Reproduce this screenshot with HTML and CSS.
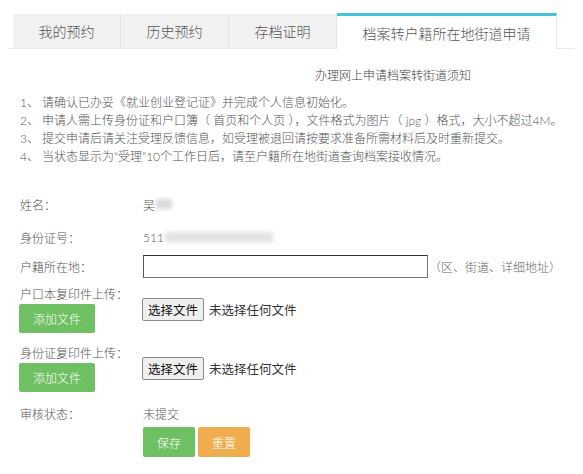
FILE: index.html
```html
<!DOCTYPE html>
<html lang="zh">
<head>
<meta charset="utf-8">
<title>档案转户籍所在地街道申请</title>
<link rel="stylesheet" href="styles.css">
</head>
<body>
<div class="tabs">
  <div class="tab">我的预约</div>
  <div class="tab">历史预约</div>
  <div class="tab">存档证明</div>
  <div class="tab active">档案转户籍所在地街道申请</div>
</div>
<div class="notice-title">办理网上申请档案转街道须知</div>
<ol class="notice">
  <li><span class="num">1、</span>请确认已办妥《就业创业登记证》并完成个人信息初始化。</li>
  <li><span class="num">2、</span>申请人需上传身份证和户口簿（ 首页和个人页 ），文件格式为图片（ jpg ）格式，大小不超过4M。</li>
  <li><span class="num">3、</span>提交申请后请关注受理反馈信息，如受理被退回请按要求准备所需材料后及时重新提交。</li>
  <li><span class="num">4、</span>当状态显示为“受理”10个工作日后，请至户籍所在地街道查询档案接收情况。</li>
</ol>
<div class="form">
  <div class="row r-name">
    <div class="label">姓名：</div>
    <div class="value">吴<span class="blur w1"></span></div>
  </div>
  <div class="row r-id">
    <div class="label">身份证号：</div>
    <div class="value">511<span class="blur w2"></span></div>
  </div>
  <div class="row r-addr">
    <div class="label">户籍所在地：</div>
    <div class="value"><input class="text" type="text"><span class="hint">（区、街道、详细地址）</span></div>
  </div>
  <div class="upload">
    <div class="up-left">
      <div class="up-label">户口本复印件上传：</div>
      <div class="btn green add">添加文件</div>
    </div>
    <div class="file"><span class="choose">选择文件</span><span class="none">未选择任何文件</span></div>
  </div>
  <div class="upload second">
    <div class="up-left">
      <div class="up-label">身份证复印件上传：</div>
      <div class="btn green add">添加文件</div>
    </div>
    <div class="file"><span class="choose">选择文件</span><span class="none">未选择任何文件</span></div>
  </div>
  <div class="row r-status">
    <div class="label">审核状态：</div>
    <div class="value">未提交</div>
  </div>
  <div class="actions">
    <div class="btn green">保存</div>
    <div class="btn orange">重置</div>
  </div>
</div>
</body>
</html>
```

FILE: styles.css
```css
* { box-sizing: border-box; }
body {
  margin: 0;
  background: #fff;
  color: #555;
  font-family: "Lato", "Noto Sans CJK SC", sans-serif;
  font-weight: 300;
  font-size: 12px;
}
.tabs {
  display: flex;
  align-items: flex-end;
  margin: 13px 8px 0;
  padding-left: 5px;
  border-bottom: 1px solid #eaeaea;
  height: 36px;
}
.tab {
  width: 108px;
  height: 34px;
  background: #f1f1f1;
  border-right: 1px solid #e4e4e4;
  display: flex;
  align-items: center;
  justify-content: center;
  font-size: 14px;
  color: #555;
}
.tab.active {
  width: 220px;
  height: 36px;
  margin-bottom: -1px;
  background: #fff;
  border-top: 3px solid #45c3d8;
  border-right: 1px solid #e8e8e8;
  padding-top: 1px;
}
.notice-title {
  padding-left: 315px;
  margin-top: 18px;
  line-height: 18px;
  color: #444;
}
.notice {
  list-style: none;
  margin: 9px 0 0;
  padding: 0 0 0 20px;
  line-height: 18px;
  color: #555;
}
.notice li { display: flex; white-space: pre; }
.num { width: 22px; flex: none; }
.form { padding-left: 20px; margin-top: 26px; }
.row { display: flex; align-items: center; }
.label { width: 123px; flex: none; }
.value { display: flex; align-items: center; }
.r-name { height: 24px; }
.r-id { height: 24px; margin-top: 9px; }
.r-addr { height: 24px; margin-top: 5px; }
.blur {
  display: inline-block;
  height: 10px;
  background: #d9d9d9;
  filter: blur(2px);
  margin-left: 1px;
}
.w1 { width: 16px; }
.w2 { width: 108px; background: #e2e2e2; }
.text {
  width: 285px;
  height: 23px;
  border: 1px solid #767676;
  border-top-color: #333;
  border-left-color: #555;
  margin: 0;
  padding: 0 3px;
  font: inherit;
}
.hint { margin-left: 1px; color: #666; }
.upload { display: flex; margin-top: 8px; }
.upload.second { margin-top: 12px; }
.up-left { width: 123px; flex: none; margin-left: -1px; }
.up-label { line-height: 18px; padding-left: 1px; }
.add { width: 76px; height: 29px; }
.file { display: flex; align-items: center; margin-top: 12px; height: 23px; }
.choose {
  display: inline-flex;
  align-items: center;
  height: 23px;
  padding: 0 5px;
  border: 1px solid #8a8a8a;
  border-radius: 2px;
  background: #efefef;
  color: #111;
  font-size: 12.5px;
  font-weight: 400;
}
.none { margin-left: 5px; color: #333; font-size: 12.5px; font-weight: 400; }
.btn {
  display: flex;
  align-items: center;
  justify-content: center;
  color: #fff;
  border-radius: 2px;
  font-size: 12px;
}
.green { background: #6fc062; }
.orange { background: #f0ad4e; }
.r-status { height: 20px; margin-top: 11px; }
.actions { display: flex; gap: 3px; margin-left: 123px; margin-top: 4px; }
.actions .btn { width: 52px; height: 30px; }
```
